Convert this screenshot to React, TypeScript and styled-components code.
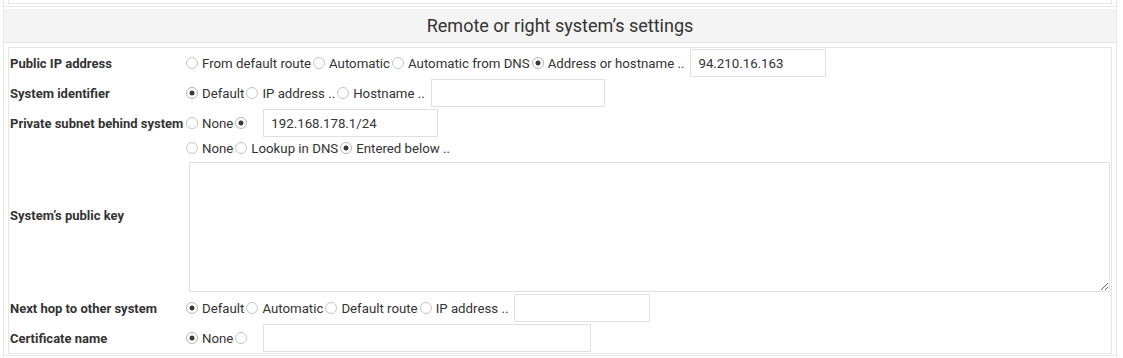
import React from 'react';
import styled, { createGlobalStyle } from 'styled-components';

type Choice = { label?: string; checked?: boolean };

type Row = {
  label: string;
  choices: Choice[];
  input?: { value?: string; width: number };
};

const rows: Row[] = [
  {
    label: 'Public IP address',
    choices: [
      { label: 'From default route' },
      { label: 'Automatic' },
      { label: 'Automatic from DNS' },
      { label: 'Address or hostname ..', checked: true },
    ],
    input: { value: '94.210.16.163', width: 136 },
  },
  {
    label: 'System identifier',
    choices: [{ label: 'Default', checked: true }, { label: 'IP address ..' }, { label: 'Hostname ..' }],
    input: { width: 174 },
  },
  {
    label: 'Private subnet behind system',
    choices: [{ label: 'None' }, { checked: true }],
    input: { value: '192.168.178.1/24', width: 175 },
  },
];

const bottomRows: Row[] = [
  {
    label: 'Next hop to other system',
    choices: [
      { label: 'Default', checked: true },
      { label: 'Automatic' },
      { label: 'Default route' },
      { label: 'IP address ..' },
    ],
    input: { width: 136 },
  },
  {
    label: 'Certificate name',
    choices: [{ label: 'None', checked: true }, {}],
    input: { width: 328 },
  },
];

const Radios = ({ choices, name }: { choices: Choice[]; name: string }) => {
  return (
    <>
      {choices.map((c, i) => (
        <Option key={i}>
          <RadioInput type="radio" name={name} defaultChecked={!!c.checked} />
          {c.label ? <span>{c.label}</span> : <Blank />}
        </Option>
      ))}
    </>
  );
};

const FieldRow = ({ row }: { row: Row }) => {
  return (
    <>
      <Label>{row.label}</Label>
      <Value>
        <Radios choices={row.choices} name={row.label} />
        {row.input && <TextInput type="text" defaultValue={row.input.value || ''} $w={row.input.width} />}
      </Value>
    </>
  );
};

const App = (): JSX.Element => {
  return (
    <>
      <GlobalStyle />
      <Page>
        <PrevPanel>
          <PrevTable />
        </PrevPanel>

        <Panel>
          <PanelHeader>Remote or right system&#8217;s settings</PanelHeader>
          <PanelBody>
            <FormTable>
              {rows.map((r) => (
                <FieldRow key={r.label} row={r} />
              ))}

              <Label>System&#8217;s public key</Label>
              <Value $stack>
                <RadioLine>
                  <Radios
                    name="pubkey"
                    choices={[{ label: 'None' }, { label: 'Lookup in DNS' }, { label: 'Entered below ..', checked: true }]}
                  />
                </RadioLine>
                <KeyArea />
              </Value>

              {bottomRows.map((r) => (
                <FieldRow key={r.label} row={r} />
              ))}
            </FormTable>
          </PanelBody>
        </Panel>
      </Page>
    </>
  );
};

const GlobalStyle = createGlobalStyle`
  body {
    margin: 0;
    background: #fff;
    font-family: Roboto, "Liberation Sans", sans-serif;
    font-size: 13px;
    color: #333;
  }
`;

const Page = styled.div`
  padding: 0 6px 0 3px;
`;

const PrevPanel = styled.div`
  border: 1px solid #e8e8e8;
  border-top: none;
  padding: 0 4px 2px;
`;

const PrevTable = styled.div`
  height: 3px;
  border: 1px solid #e5e5e5;
  border-top: none;
`;

const Panel = styled.div`
  margin-top: 2px;
  border: 1px solid #e8e8e8;
  border-top: none;
`;

const PanelHeader = styled.div`
  height: 34px;
  background: #f4f4f4;
  border-bottom: 1px solid #e6e6e6;
  display: flex;
  align-items: center;
  justify-content: center;
  font-size: 18px;
  color: #333;
  padding-bottom: 1px;
  box-sizing: border-box;
`;

const PanelBody = styled.div`
  padding: 4px 4px 1px;
`;

const FormTable = styled.div`
  display: grid;
  grid-template-columns: 175px 1fr;
  border: 1px solid #e5e5e5;
`;

const Label = styled.div`
  display: flex;
  align-items: center;
  padding-left: 1px;
  font-weight: bold;
  white-space: nowrap;
  color: #333;
`;

const Value = styled.div<{ $stack?: boolean }>`
  display: flex;
  flex-direction: ${(p) => (p.$stack ? 'column' : 'row')};
  align-items: ${(p) => (p.$stack ? 'stretch' : 'center')};
  min-height: 30px;
  padding: ${(p) => (p.$stack ? '0 0 1px' : '0')};
`;

const RadioLine = styled.div`
  display: flex;
  align-items: center;
  height: 20px;
`;

const Option = styled.label`
  display: inline-flex;
  align-items: center;
  white-space: nowrap;
  font-size: 13.25px;
  color: #333;
`;

const RadioInput = styled.input`
  appearance: none;
  width: 12px;
  height: 12px;
  margin: 0 4px 0 2px;
  border: 1px solid #c6c6c6;
  border-radius: 50%;
  background: #fff;
  box-sizing: border-box;
  &:checked {
    background: radial-gradient(circle, #3a3a3a 0 2.2px, #fff 2.8px);
    border-color: #b5b5b5;
  }
`;

const Blank = styled.span`
  display: inline-block;
  width: 6px;
`;

const TextInput = styled.input<{ $w: number }>`
  width: ${(p) => p.$w}px;
  height: 28px;
  margin-left: 6px;
  padding: 0 7px;
  border: 1px solid #e0e0e0;
  box-sizing: border-box;
  font-family: Roboto, "Liberation Sans", sans-serif;
  font-size: 13.25px;
  color: #333;
  outline: none;
`;

const KeyArea = styled.textarea`
  margin: 4px 1px 0 5px;
  height: 130px;
  border: 1px solid #e0e0e0;
  box-sizing: border-box;
  font-family: Roboto, "Liberation Sans", sans-serif;
  font-size: 13px;
  outline: none;
`;

export default App;
